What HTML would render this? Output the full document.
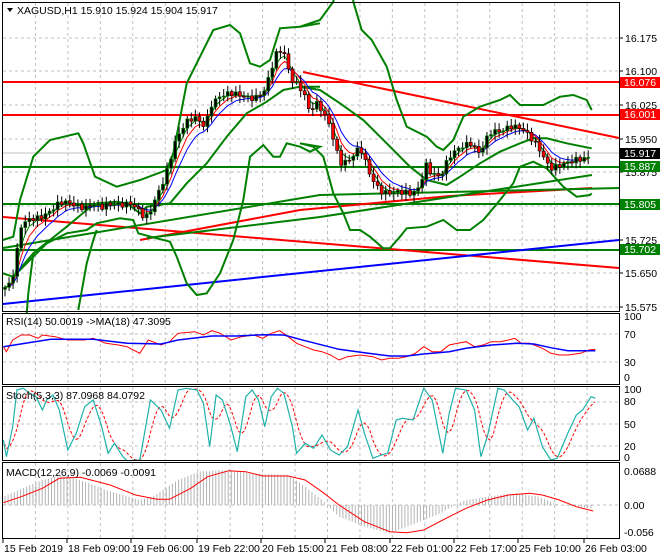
<!DOCTYPE html>
<html><head><meta charset="utf-8"><style>
html,body{margin:0;padding:0;background:#fff;}
svg{display:block;font-family:"Liberation Sans",Tahoma,sans-serif;font-size:10.5px;}
</style></head><body>
<svg id="s" width="660" height="560" xmlns="http://www.w3.org/2000/svg">
<rect width="660" height="560" fill="#fff"/>
<g id="grid" stroke="#c0c0c0" stroke-dasharray="3,3" stroke-width="1"></g>
<g id="main"></g>
<g id="frames" fill="none" stroke="#000" stroke-width="1">
<rect x="2.5" y="2.5" width="617" height="309"/>
<rect x="2.5" y="313.5" width="617" height="71"/>
<rect x="2.5" y="386.5" width="617" height="74"/>
<rect x="2.5" y="462.5" width="617" height="76"/>
</g>
<g id="lbl" fill="#000"></g>
</svg>
<script>
var NS="http://www.w3.org/2000/svg",S=document.getElementById('s');
function el(p,t,a,txt){var e=document.createElementNS(NS,t);for(var k in a)e.setAttribute(k,a[k]);if(txt!=null)e.textContent=txt;document.getElementById(p).appendChild(e);return e;}
function pl(p,pts,c,w,extra){var a={points:pts.map(function(q){return q[0].toFixed(1)+','+q[1].toFixed(1)}).join(' '),fill:'none',stroke:c,'stroke-width':w};for(var k in extra)a[k]=extra[k];return el(p,'polyline',a);}
function interp(pts,x){if(x<=pts[0][0])return pts[0][1];for(var i=1;i<pts.length;i++){if(x<=pts[i][0]){var a=pts[i-1],b=pts[i];return a[1]+(b[1]-a[1])*(x-a[0])/(b[0]-a[0]);}}return pts[pts.length-1][1];}
function sc(arr,dx,dy,sx,sy){return arr.map(function(q){return [dx+q[0]/sx,dy+q[1]/sy];});}
// grid
var gx=[];for(var k=0;k<20;k++){var x=3+32.45*k;if(x<619)gx.push(x);}
gx.forEach(function(x){if(x>4){[[3,311],[314,384],[387,460],[463,538]].forEach(function(r){el('grid','line',{x1:x,x2:x,y1:r[0],y2:r[1]});});}});
[38,71,105,139,172,206,240,273,307,334,362,402,424,446,505].forEach(function(y){el('grid','line',{x1:3,x2:619,y1:y,y2:y});});
// main chart
var M='main';
// band-ish and level lines
pl(M,[[3,82],[619,82]],'#f00',2);
pl(M,[[3,115],[619,115]],'#f00',2);
pl(M,[[3,167],[619,167]],'#008000',2);
pl(M,[[3,204],[619,204]],'#008000',2);
pl(M,[[3,250],[619,250]],'#008000',2);
pl(M,[[3,153],[619,153]],'#c0c0c0',1);
pl(M,[[303,72],[619,138]],'#f00',2);
pl(M,[[3,217],[619,268]],'#f00',2);
pl(M,[[3,304],[619,240]],'#00f',2);
pl(M,[[140,240],[300,210],[450,196],[592,188]],'#f00',2);
pl(M,[[3,248],[320,195],[620,188]],'#008000',2);
pl(M,[[147,238],[320,217],[592,175]],'#008000',2);
var up=sc([[8,720],[40,710],[60,600],[100,470],[150,420],[235,400],[250,430],[285,530],[350,560],[420,540],[500,510],[520,460],[560,250],[600,170],[640,90],[690,75],[720,100],[750,190],[780,200],[810,180],[840,85],[900,80],[960,70]],0,0,3,3)
 .concat(sc([[0,80],[60,60],[100,5],[105,-20]],300,0,3,3));
pl(M,up,'#008000',2);
pl(M,sc([[160,-20],[160,5],[185,90],[215,120],[260,200],[290,300],[320,380],[380,410],[410,440],[430,450],[460,420],[490,350],[540,320],[600,300],[630,285],[660,315],[730,315],[780,290],[820,285],[860,300],[875,330]],300,0,3,3),'#008000',2);
var lo=sc([[8,820],[40,830],[80,790],[140,730],[200,700],[260,690],[290,670],[360,655],[400,660],[415,700],[470,715],[510,725],[530,770],[560,850],[590,885],[620,880],[660,820],[700,720],[730,600],[750,470],[790,435],[820,470],[840,470],[860,430],[900,440],[930,455],[960,440]],0,0,3,3)
 .concat(sc([[0,430],[40,440],[70,470],[100,580],[130,640],[150,690],[180,690],[210,710],[250,745],[270,745],[300,710],[320,685],[380,680],[430,660],[470,690],[510,690],[550,660],[600,600],[640,550],[660,500],[700,485],[740,505],[790,560],[830,590],[870,585],[875,580]],300,0,3,3));
pl(M,lo,'#008000',2);
// lower-left band piece (from bottom)
pl(M,sc([[80,940],[85,880],[100,760],[150,720]],0,0,3,3),'#008000',2);
pl(M,sc([[235,930],[260,790],[280,720],[290,690]],0,0,3,3),'#008000',2);
var mid=sc([[40,830],[100,760],[150,720],[200,680],[260,630],[290,610],[350,605],[380,610],[420,640],[440,620],[510,610],[560,550],[620,490],[680,410],[740,340],[800,305],[850,270],[900,260],[960,260]],0,0,3,3)
 .concat(sc([[0,260],[60,270],[120,310],[190,360],[260,430],[330,500],[380,540],[440,555],[480,530],[540,490],[600,455],[660,430],[700,415],[740,415],[800,430],[850,440],[875,445]],300,0,3,3));
pl(M,mid,'#008000',2);
// price path
var cp=[[5,285],[10,283],[15,270],[20,230],[30,220],[45,212],[60,205],[80,205],[95,203],[100,210],[115,205],[130,200],[140,212],[145,222],[150,215],[165,175],[175,140],[185,125],[195,120],[205,125],[212,100],[220,95],[240,97],[255,95],[265,90],[270,75],[278,52],[285,55],[290,75],[300,85],[305,95],[310,115],[315,105],[320,110],[330,125],[340,160],[350,160],[360,150],[370,175],[380,188],[390,192],[400,195],[410,195],[420,185],[425,160],[430,170],[440,180],[450,158],[460,145],[470,140],[480,155],[490,135],[500,130],[510,123],[520,128],[530,140],[540,150],[550,165],[560,165],[570,165],[580,160],[592,153]];
var xs=[],cl=[];
for(var x=5;x<=592;x+=4.05){xs.push(x);var n=Math.sin(x*1.7)*3+Math.sin(x*0.63)*2.5;cl.push(interp(cp,x)+n);}
function ema(a,p){var k=2/(p+1),o=[],v=a[0];for(var i=0;i<a.length;i++){v=v+(a[i]-v)*k;o.push(v);}return o;}
[[8,'#00f'],[5,'#f00'],[3,'#008000']].forEach(function(m){var e=ema(cl,m[0]);pl(M,xs.map(function(x,i){return [x,e[i]];}),m[1],1);});
for(var i=0;i<xs.length;i++){
 var c=cl[i],o=i?cl[i-1]:c+2,x=xs[i];
 var hi=Math.min(o,c)-2-Math.abs(Math.sin(i*2.3))*5,lw=Math.max(o,c)+2+Math.abs(Math.cos(i*1.9))*5;
 el(M,'line',{x1:x,x2:x,y1:hi,y2:lw,stroke:'#000','stroke-width':1});
 var t=Math.min(o,c),h=Math.max(1,Math.abs(o-c));
 el(M,'rect',{x:x-1.5,y:t,width:3,height:h,fill:c<o?'#000':'#f00',stroke:c<o?'#008000':'#000','stroke-width':0.6});
}
// RSI
var R='main';
pl(R,sc([[8,140],[15,155],[30,120],[50,105],[70,105],[90,115],[100,105],[130,110],[160,120],[200,120],[220,115],[250,130],[280,135],[300,140],[330,160],[350,120],[380,135],[400,125],[420,100],[460,95],[480,105],[500,92],[520,100],[545,120],[570,110],[600,105],[620,115],[640,100],[660,92],[680,110],[700,130],[720,140],[740,150],[760,155],[780,165],[800,180],[820,170],[850,165],[880,170],[900,180],[920,175],[940,175],[960,170],[980,160],[1000,140],[1020,155],[1040,155],[1060,135],[1080,130],[1100,125],[1120,140],[1140,135],[1160,125],[1180,125],[1200,120],[1215,115],[1230,130],[1250,130],[1280,145],[1300,160],[1320,165],[1340,165],[1370,160],[1390,150],[1405,148]],0,300,2.36,3),'#f00',1);
pl(R,sc([[8,140],[60,130],[120,118],[160,118],[220,118],[300,130],[380,132],[420,120],[500,108],[560,108],[620,104],[670,105],[720,122],[800,148],[860,158],[920,168],[960,168],[1000,162],[1060,155],[1100,145],[1160,135],[1220,130],[1260,132],[1300,143],[1340,152],[1405,152]],0,300,2.36,3),'#00f',1.5);
// Stoch
var st=sc([[8,420],[15,470],[30,380],[40,270],[55,265],[70,280],[85,290],[100,330],[110,300],[125,285],[140,330],[160,450],[180,400],[200,320],[220,300],[240,380],[255,460],[270,430],[290,470],[300,482],[330,480],[355,300],[380,330],[400,385],[420,270],[440,265],[465,270],[480,310],[495,440],[510,285],[525,300],[545,380],[560,455],[580,290],[595,270],[610,300],[625,380],[640,290],[655,265],[670,280],[690,380],[700,460],[720,430],[740,445],[760,405],[780,450],[800,465],[820,440],[845,330],[860,400],[880,475],[900,465],[915,460],[935,360],[950,355],[975,360],[1000,265],[1020,300],[1045,460],[1060,340],[1075,265],[1100,270],[1120,330],[1135,470],[1150,410],[1175,265],[1190,270],[1210,300],[1225,320],[1245,390],[1260,355],[1280,440],[1300,480],[1315,475],[1340,400],[1360,345],[1375,330],[1395,290],[1405,295]],0,300,2.36,3);
var sx=[],sv=[];for(var x=4;x<=595;x+=3){sx.push(x);sv.push(interp(st,x));}
var sig=[];for(var i=0;i<sv.length;i++){var a=0,n=0;for(var j=Math.max(0,i-4);j<=i;j++){a+=sv[j];n++;}sig.push(a/n);}
pl(R,sx.map(function(x,i){return [x,sig[i]];}),'#f00',1,{'stroke-dasharray':'3,2'});
pl(R,st,'#20b2aa',1.2);
// MACD hist
var hp=sc([[8,590],[100,540],[150,525],[200,545],[250,570],[330,600],[360,590],[420,540],[470,515],[520,510],[600,520],[680,525],[720,560],[760,600],[800,650],[860,680],[920,700],[980,670],[1040,640],[1080,610],[1100,600],[1180,585],[1220,580],[1270,590],[1320,615],[1400,625]],0,300,2.36,3);
for(var x=5;x<=593;x+=3.1){var y=interp(hp,x);el(R,'line',{x1:x,x2:x,y1:505,y2:y,stroke:'#b4b4b4','stroke-width':1});}
pl(R,sc([[8,608],[50,590],[100,565],[140,535],[190,532],[260,555],[320,585],[370,598],[400,598],[450,565],[490,530],[540,512],[580,515],[620,528],[680,528],[720,540],[760,575],[800,615],[860,665],[920,695],[960,698],[1000,690],[1060,650],[1100,625],[1150,600],[1200,585],[1250,580],[1280,585],[1320,600],[1360,620],[1400,633]],0,300,2.36,3),'#f00',1);
// labels
var L='lbl';
el(L,'path',{d:'M7,8 L13,8 L10,12 Z',fill:'#000'});
el(L,'text',{x:17,y:14},'XAGUSD,H1  15.910 15.924 15.904 15.917');
[['16.175',38],['16.100',71],['16.025',105],['15.950',139],['15.875',172],['15.800',206],['15.725',240],['15.650',273],['15.575',307]].forEach(function(p){
 el(L,'line',{x1:619,x2:623,y1:p[1],y2:p[1],stroke:'#000'});el(L,'text',{x:625,y:p[1]+4},p[0]);});
[['16.076',82,'#f00'],['16.001',114,'#f00'],['15.917',153,'#000'],['15.887',166,'#008000'],['15.805',204,'#008000'],['15.702',249,'#008000']].forEach(function(p){
 el(L,'rect',{x:620,y:p[1]-5,width:40,height:11,fill:p[2]});el(L,'text',{x:624,y:p[1]+4,fill:'#fff'},p[0]);});
el(L,'text',{x:6,y:325},'RSI(14) 50.0019  ->MA(18) 47.3095');
el(L,'text',{x:6,y:399},'Stoch(5,3,3) 87.0968 84.0792');
el(L,'text',{x:6,y:476},'MACD(12,26,9) -0.0069 -0.0091');
[['100',320],['70',338],['30',366],['0',381],['100',393],['80',405],['50',428],['20',450],['0',461],['0.0688',475],['0.00',509],['-0.056',536]].forEach(function(p){el(L,'text',{x:624,y:p[1]},p[0]);});
[['15 Feb 2019',3],['18 Feb 09:00',67],['19 Feb 06:00',131],['19 Feb 22:00',197],['20 Feb 15:00',261],['21 Feb 08:00',325],['22 Feb 01:00',390],['22 Feb 17:00',454],['25 Feb 10:00',518],['26 Feb 03:00',584]].forEach(function(p){
 el(L,'line',{x1:p[1],x2:p[1],y1:539,y2:543,stroke:'#000'});el(L,'text',{x:p[1]+1,y:552},p[0]);});
</script>
</body></html>
